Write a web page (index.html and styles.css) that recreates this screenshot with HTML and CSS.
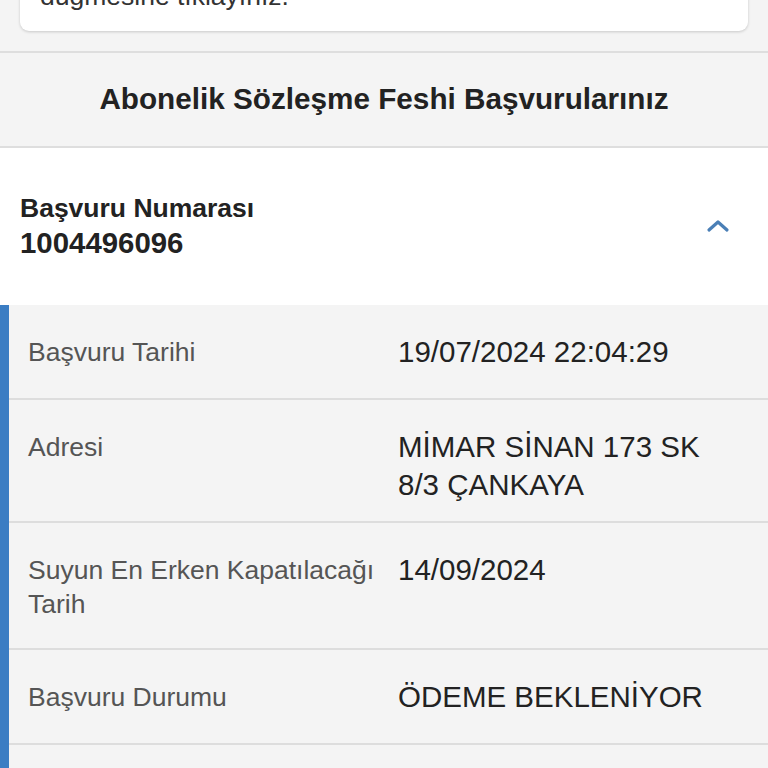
FILE: index.html
```html
<!DOCTYPE html>
<html lang="tr">
<head>
  <meta charset="UTF-8" />
  <meta name="viewport" content="width=device-width, initial-scale=1.0"/>
  <title>Abonelik Sözleşme Feshi Başvurularınız</title>
  <link rel="stylesheet" href="styles.css">
</head>
<body>
  <div class="notice">
    <p>düğmesine tıklayınız.</p>
  </div>

  <h2 class="section-title">Abonelik Sözleşme Feshi Başvurularınız</h2>

  <div class="application">
    <div class="application-head">
      <div>
        <div class="label-strong">Başvuru Numarası</div>
        <div class="number">1004496096</div>
      </div>
      <svg class="chevron" width="24" height="16" viewBox="0 0 24 16">
        <path d="M3 12 L12 4 L21 12" fill="none" stroke="#4a7fb6" stroke-width="3.2" stroke-linecap="round" stroke-linejoin="round"/>
      </svg>
    </div>

    <div class="details">
      <div class="row">
        <div class="key">Başvuru Tarihi</div>
        <div class="val">19/07/2024 22:04:29</div>
      </div>
      <div class="row row-address">
        <div class="key">Adresi</div>
        <div class="val">MİMAR SİNAN 173 SK<br>8/3 ÇANKAYA</div>
      </div>
      <div class="row">
        <div class="key">Suyun En Erken Kapatılacağı Tarih</div>
        <div class="val">14/09/2024</div>
      </div>
      <div class="row">
        <div class="key">Başvuru Durumu</div>
        <div class="val">ÖDEME BEKLENİYOR</div>
      </div>
      <div class="row">
        <div class="key">&nbsp;</div>
        <div class="val">&nbsp;</div>
      </div>
    </div>
  </div>
</body>
</html>
```

FILE: styles.css
```css
body {
  margin: 0;
  font-family: 'Liberation Sans', Arial, sans-serif;
  background: #f4f4f4;
  color: #222;
  overflow: hidden;
}

.notice {
  margin: -25px 20px 0;
  background: #fff;
  border-radius: 0 0 9px 9px;
  box-shadow: 0 1px 3px rgba(0, 0, 0, 0.18);
  padding: 0 20px 14px;
}

.notice p {
  margin: 0;
  font-size: 26.5px;
  line-height: 42px;
  color: #333;
}

.section-title {
  margin: 20px 0 0;
  border-top: 2px solid #dedede;
  border-bottom: 2px solid #dedede;
  text-align: center;
  font-size: 29.7px;
  font-weight: bold;
  line-height: 32px;
  padding: 30px 0 31px;
  color: #222;
}

.application-head {
  background: #fff;
  display: flex;
  justify-content: space-between;
  align-items: center;
  padding: 44px 30px 43px 20px;
}

.label-strong {
  font-size: 26.5px;
  font-weight: bold;
  line-height: 32px;
}

.number {
  font-size: 29.4px;
  font-weight: bold;
  line-height: 38px;
}

.chevron {
  margin-right: 8px;
  margin-top: -2px;
}

.details {
  border-left: 9px solid #3b7dc3;
  background: #f4f4f4;
}

.row {
  display: grid;
  grid-template-columns: 370px 1fr;
  padding: 28px 0 27px 19px;
  border-bottom: 2px solid #dddddd;
}

.row-address {
  padding-bottom: 17px;
}

.key {
  font-size: 26.5px;
  line-height: 34px;
  color: #555;
  padding-top: 2px;
  padding-right: 8px;
}

.val {
  font-size: 29.5px;
  line-height: 38px;
  color: #222;
}
```
